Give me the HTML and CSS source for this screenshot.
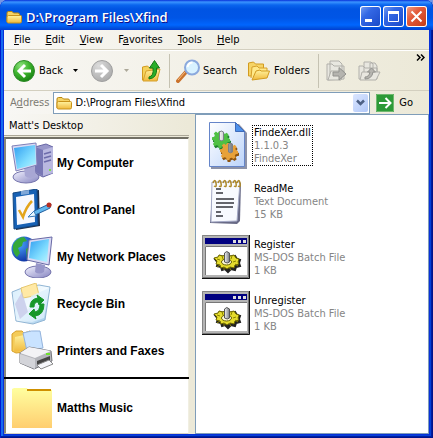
FILE: index.html
```html
<!DOCTYPE html>
<html lang="en">
<head>
<meta charset="utf-8">
<meta name="viewport" content="width=device-width, initial-scale=1">
<title>D:\Program Files\Xfind</title>
<link rel="stylesheet" href="styles.css">
</head>
<body>
<svg class="defs" width="0" height="0" aria-hidden="true">
  <defs>
    <linearGradient id="fold" x2="0" y2="1"><stop stop-color="#fff3a0"/><stop offset="1" stop-color="#f0b93c"/></linearGradient>
    <linearGradient id="music" x2="0" y2="1"><stop stop-color="#ffffa0"/><stop offset="1" stop-color="#ffce70"/></linearGradient>
    <radialGradient id="green" cx=".35" cy=".25" r=".8"><stop stop-color="#8be07c"/><stop offset=".5" stop-color="#3fb52f"/><stop offset="1" stop-color="#158010"/></radialGradient>
    <radialGradient id="gray" cx=".35" cy=".25" r=".8"><stop stop-color="#dcdcdc"/><stop offset="1" stop-color="#a9a9a9"/></radialGradient>
    <linearGradient id="screen" x2="1" y2="1"><stop stop-color="#2f9df0"/><stop offset=".6" stop-color="#7fdcff"/><stop offset="1" stop-color="#b8f4ff"/></linearGradient>
    <linearGradient id="lilac" x2="1" y2="1"><stop stop-color="#f2f2ff"/><stop offset="1" stop-color="#8584c0"/></linearGradient>
    <linearGradient id="bin" x2="1" y2="1"><stop stop-color="#d5ecfb"/><stop offset=".5" stop-color="#f4fbff"/><stop offset="1" stop-color="#8bbfe6"/></linearGradient>
    <linearGradient id="page" x2="1" y2="1"><stop stop-color="#ffffff"/><stop offset="1" stop-color="#bcd4fa"/></linearGradient>
    <linearGradient id="shaft"><stop stop-color="#f4f4f4"/><stop offset="1" stop-color="#777b82"/></linearGradient>
    <radialGradient id="earth" cx=".3" cy=".3" r=".8"><stop stop-color="#4ba6ff"/><stop offset="1" stop-color="#0a2b9c"/></radialGradient>
    <symbol id="folder" viewBox="0 0 16 16">
      <path d="M1 13V4q0-1.500 1.500-1.500h3.500L7.500 4H12q1.500 0 1.500 1.500V7" fill="#f6d466" stroke="#b8860e"/>
      <path d="M2.500 6.500h12q1 0 1 1v5q0 1.500-1.500 1.500H2.500Q1 14 1 12.500V8q0-1.500 1.500-1.500z" fill="url(#fold)" stroke="#c8921a"/>
    </symbol>
    <symbol id="gear" viewBox="-10 -10 20 20">
      <path d="M-2-9h4l.5 2.500 2 .8L6.500-7l2 2.500-1.500 2 .6 1.500L10 0v3l-2.600.5-1 1.600L7.500 7 5 9 3 7.400 1 8l-.6 2h-3L-3.200 7.600-5 7-7.200 8-9 5.500-7.400 3.500-8 1.700-10 1v-3l2.400-.5.8-1.600L-8-6l2.400-2.300 2 1.500z"/>
    </symbol>
    <symbol id="batch" viewBox="0 0 48 44">
      <path fill="#b4b4b4" d="M0 0h48v44H0z"/><path d="M.5 43V.5H47" fill="none" stroke="#858585"/>
      <path d="M47.500 0v43.500H0" fill="none" stroke="#111"/><path d="M46.500 1v41.500H1" fill="none" stroke="#777"/>
      <path d="M3 3h42v6H3z" fill="#000080"/><path d="M31 5h3v3h-3zm5 0h3v3h-3zm5 0h3v3h-3z" fill="#ddd"/>
      <path d="M3 11h42v29H3z" fill="#fff"/><path d="M3.500 40V11.500H45" fill="none" stroke="#777"/>
      <path d="M13 24l4-1 1-2 4 1 3-2 4 2 4-1 2 3 3 1-1 3 1 3-4 1-1 3-4-1-3 3-3-3-3 1-1-3-4-1 1-3z" fill="#222" stroke="#222" stroke-width="2"/>
      <path d="M12 23l4-1 1-2 4 1 3-2 4 2 4-1 2 3 3 1-1 3 1 2-4 1-1 3-4-1-3 2-3-2-3 1-1-3-4-1 1-3z" fill="#e5dc2e" stroke="#6d6700"/>
      <path d="M15 24l3 1m2-4l1 3m9-3l-1 3m5 2l-3 1m-13 3l-3 2m7 0v3m5-3l2 3m4-6l3 2" stroke="#8a8300"/>
      <ellipse cx="24.500" cy="27" rx="5" ry="3" fill="#fffbd8" stroke="#655f00"/>
      <path d="M22.500 18q2-3 5 0v9q-2 2-5 0z" fill="url(#shaft)" stroke="#555"/>
    </symbol>
  </defs>
</svg>
<div class="window">
  <header class="titlebar">
    <svg class="i16" aria-hidden="true"><use href="#folder"/></svg>
    <h1>D:\Program Files\Xfind</h1>
    <button class="caption" aria-label="Minimize"><svg width="21" height="21"><path d="M5 13h7v3H5z" fill="#fff"/></svg></button>
    <button class="caption" aria-label="Maximize"><svg width="21" height="21"><path d="M5.500 6v9.500h10V6" fill="none" stroke="#fff"/><path d="M5 5h11v3H5z" fill="#fff"/></svg></button>
    <button class="caption close" aria-label="Close"><svg width="21" height="21"><path d="M5.500 5.500l10 10m0-10l-10 10" stroke="#fff" stroke-width="2"/></svg></button>
  </header>
  <div class="client">
    <nav class="menu">
      <button><u>F</u>ile</button><button><u>E</u>dit</button><button><u>V</u>iew</button><button>F<u>a</u>vorites</button><button><u>T</u>ools</button><button><u>H</u>elp</button>
    </nav>
    <div class="toolbar">
      <button class="tool back"><svg width="24" height="24"><circle cx="12" cy="12" r="10.500" fill="url(#green)" stroke="#2e8b28"/><path d="M13 6l-6 6 6 6M7.500 12H19" fill="none" stroke="#fff" stroke-width="3"/></svg>Back</button>
      <button class="drop" aria-label="Back history"><svg width="5" height="3"><path d="M0 0h5L2.500 3z"/></svg></button>
      <button class="tool" aria-label="Forward" disabled><svg width="24" height="24"><circle cx="12" cy="12" r="10.500" fill="url(#gray)" stroke="#a0a0a0"/><path d="M11 6l6 6-6 6M16.500 12H5" fill="none" stroke="#fff" stroke-width="3"/></svg></button>
      <button class="drop" aria-label="Forward history" disabled><svg width="5" height="3"><path d="M0 0h5L2.500 3z" fill="#aca899"/></svg></button>
      <button class="tool up" aria-label="Up"><svg width="20" height="24"><path d="M1.500 21V8l5-1 2 2h8v12z" fill="#f5d25b" stroke="#d29b20"/><path d="M2 22l3-10 14-2-3 12z" fill="url(#fold)" stroke="#d6a02d"/><path d="M8 18q5-1 4-9H8.500l5-7.500 5 7.500h-3q1 10-7.500 11z" fill="#29ae28" stroke="#147815"/></svg></button>
      <span class="rule"></span>
      <button class="tool search"><svg width="24" height="24"><path d="M2 22l8-9" stroke="#ca722c" stroke-width="4" stroke-linecap="round"/><path d="M2 21l7-8" stroke="#f6bd82" stroke-width="1"/><circle cx="16" cy="8.500" r="7" fill="#d8f2ff" stroke="#8ba9dd" stroke-width="2"/><path d="M11.500 8q1-4.500 5-4.500" fill="none" stroke="#fff" stroke-width="2"/></svg>Search</button>
      <button class="tool"><svg width="24" height="24"><path d="M1.500 17V4l5-1 2 2h8v12z" fill="#f6d466" stroke="#d29b20"/><path d="M4 19l1-11 5-1 2 2h8v3" fill="#ffe98a" stroke="#d6a02d"/><path d="M5 21l4-9 4-1 1 1h8.500L20 19z" fill="url(#fold)" stroke="#d29b20"/></svg>Folders</button>
      <span class="rule"></span>
      <button class="tool" aria-label="Move To" disabled><svg width="24" height="24" fill="#e8e7e0" stroke="#b1b0aa"><path d="M2 21V5h5l2 2h10v13zM5 20V2h9l3 3v12"/><path d="M3 21l3-9h13l-3 9z"/><path d="M8 13h6V8.500l7 6.500-7 6v-4H8z" fill="#b5b4af" stroke="#92928e"/></svg></button>
      <button class="tool copy" aria-label="Copy To" disabled><svg width="24" height="24" fill="#e8e7e0" stroke="#b1b0aa"><path d="M2 20V7h4l2 2h12v11zM7 17V3h7l2 2v12M13 14V4h5l2 3v10"/><path d="M3 21l2-8h18l-4 8z"/><path d="M8 18q4 0 5-5h-2.500l4-4 4 4H16q-1 7-8 7z" fill="#b5b4af" stroke="#92928e"/></svg></button>
      <button class="more" aria-label="More buttons"><svg width="9" height="7"><path d="M1 .5l3 3-3 3M5 .5l3 3-3 3" fill="none" stroke="#000" stroke-width="1.500"/></svg></button>
    </div>
    <div class="address">
      <label for="addr">A<u>d</u>dress</label>
      <div class="combo">
        <svg class="i16" aria-hidden="true"><use href="#folder"/></svg>
        <input id="addr" type="text" value="D:\Program Files\Xfind">
        <button aria-label="Show addresses"><svg width="15" height="18"><path d="M4 6.500l3.500 3.500L11 6.500" fill="none" stroke="#4d6185" stroke-width="2.500"/></svg></button>
      </div>
      <button class="go"><svg width="18" height="18"><path d="M0 0h18v18H0z" fill="#2d9a38"/><path d="M.5.500h17v17H.5z" fill="none" stroke="#6fb86e"/><path d="M3 9h11M9.500 4l5 5-5 5" fill="none" stroke="#fff" stroke-width="2"/></svg>Go</button>
    </div>
    <div class="panes">
      <aside class="side">
        <h2>Matt's Desktop</h2>
        <ul class="places">
          <li><a href="#"><svg viewBox="0 0 42 42"><path d="M24 5l11-3 7 3v26l-10 4-8-4z" fill="#9897ca" stroke="#6766a5"/><path d="M24 5l8 3v26l-8-4z" fill="#7877b5"/><path d="M32 8l10-3v26l-10 3z" fill="#b9b8e0"/><path d="M33 12l7-2m-7 6l7-2m-7 6l7-2" stroke="#6c6baa" stroke-width="1.500"/><path d="M38 27h2v2h-2z" fill="#7be04b"/><ellipse cx="15" cy="35" rx="13" ry="6" fill="url(#lilac)" stroke="#7675ad"/><path d="M13 25l10-2 2 11q-6 4-11 0z" fill="#a8a7d4"/><path d="M1 4l24-3 1 22-21 6z" fill="#d9d9f4" stroke="#7f80b8"/><path d="M3 6l21-3 1 19-19 5z" fill="url(#screen)"/></svg>My Computer</a></li>
          <li><a href="#"><svg viewBox="0 0 42 42"><path d="M4 4l24-3 1 36-24 4z" fill="#222f48"/><path d="M2 4l24-4 1 36-24 4z" fill="#1761b5" stroke="#114784"/><path d="M5 8l18-3 1 28-18 3z" fill="#f6f8ff"/><path d="M10 2l8-1v4l-8 1z" fill="#7ea6d8"/><path d="M8 21l4 7q3-10 9-16" fill="none" stroke="#e3a51c" stroke-width="2.500"/><path d="M19 27l4-5 13-6 4-1-1 4-4 2-13 6z" fill="#62b8ee" stroke="#245f9f"/><path d="M17 28l6-6 2 5z" fill="#e9f7ff" stroke="#3c7dba"/><circle cx="38" cy="16" r="2.500" fill="#b62d20"/></svg>Control Panel</a></li>
          <li><a href="#"><svg viewBox="0 0 42 42"><circle cx="13" cy="13" r="12.500" fill="url(#earth)"/><path d="M2 9q4-8 11-8l3 4-4 1-1 4-4 2 2 5-3 4q-5-4-4-12zM15 13l5-3 5 4-3 8-6 2z" fill="#35a83a"/><ellipse cx="27" cy="36" rx="13" ry="6" fill="url(#lilac)" stroke="#7675ad"/><path d="M25 27l9 2-1 7q-5 3-9 0z" fill="#9796c9"/><path d="M18 4l23-3-3 28-22-5z" fill="#d9d9f4" stroke="#6869a5"/><path d="M20 6l18-3-2 23-18-4z" fill="url(#screen)"/></svg>My Network Places</a></li>
          <li><a href="#"><svg viewBox="0 0 42 42"><path d="M1 9l10-4 17-3 11 2-5 33-12 4-17-3z" fill="url(#bin)" stroke="#91b5d4"/><path d="M10 5l15-5 3 12-16 3z" fill="#ffe9a5" stroke="#e7c86f"/><path d="M2 11l11 4 4 14 3-16 18-8-5 30-12 4-16-3z" fill="#dff0fc" opacity=".8"/><path d="M11 9l6 20-8 7-5-15z" fill="#c4c4e6" opacity=".7"/><path d="M19 24q0-8 8-9l-1-3 7 5-5 5-1-3q-4 0-4 5zM33 21q0 11-9 12l1 3-7-5 5-5 1 3q5-1 5-8z" fill="#17972a" stroke="#17972a"/></svg>Recycle Bin</a></li>
          <li><a href="#"><svg viewBox="0 0 42 42"><path d="M1 4l4-3h6l2 2 6-2 3 3v17L5 23l-4-2z" fill="#f4cb58" stroke="#d8a029"/><path d="M4 7l14-3v16L3 22z" fill="url(#fold)"/><path d="M12 3q8-3 17-2l3 17-16 3z" fill="#c9e3ff" stroke="#93b3dc"/><path d="M9 23l9-6 22 4 1 10-18 8-14-6z" fill="#b4b5bb" stroke="#74757b"/><path d="M9 23l9-6 22 4-16 7z" fill="#f3f3f6"/><path d="M9 24l15 5v10L9 33z" fill="#d3d4d9"/><path d="M26 31l13-5v5l-13 5z" fill="#444"/><path d="M26 35l12-5 4 4-12 5z" fill="#f5f6fa" stroke="#888"/><path d="M35 23h4v2h-4z" fill="#6ee12c"/></svg>Printers and Faxes</a></li>
        </ul>
        <hr>
        <ul class="places extra">
          <li><a href="#"><svg viewBox="0 0 42 42"><path d="M1 3V2l2-1h13l1 2h24v38H1z" fill="url(#music)"/><path d="M16 2h24v2H16z" fill="#cf9000"/></svg>Matths Music</a></li>
        </ul>
      </aside>
      <main class="files">
        <a class="file focus" href="#"><svg viewBox="0 0 48 48"><path d="M8 3h29l8 9v36H9z" fill="#8d93a8"/><path d="M7.500 1.500h26l9 9v35h-35z" fill="url(#page)" stroke="#6585c9"/><path d="M33.500 1.500l9 9h-9z" fill="#4c90ea" stroke="#3e6ab9"/><use href="#gear" x="10" y="11" width="20" height="18" fill="#1f8030"/><use href="#gear" x="9" y="9" width="20" height="18" fill="#4fc044"/><use href="#gear" x="18" y="23" width="20" height="18" fill="#8f5510"/><use href="#gear" x="17" y="21" width="20" height="18" fill="#e7a13a"/><path d="M17.500 11q1.500-2 4 0v8q-2 1.500-4 0zM26.500 23q1.500-2 4 0v8q-2 1.500-4 0z" fill="url(#shaft)" stroke="#7b8089"/></svg><span class="info"><b>FindeXer.dll</b><i>1.1.0.3</i><i>FindeXer</i></span></a>
        <a class="file" href="#"><svg viewBox="0 0 48 48"><path d="M11 6h28l-1 38-3 3-27-1z" fill="#686a86"/><path d="M10 5h28l-3 39-26 1z" fill="#f8faff" stroke="#a4a9c6"/><g fill="none" stroke="#33343d" stroke-width="1.500"><path d="M14 12h5m-5 4h7m-7 6h18m-18 4h18m-18 4h17m-17 5h5m-5 4h7"/></g><path d="M11 6q2-5 3 0t-2 3M16 6q2-5 3 0t-2 3M21 6q2-5 3 0t-2 3M26 6q2-5 3 0t-2 3M31 6q2-5 3 0t-2 3M35 6q2-5 3 0t-2 3" fill="none" stroke="#ae8929" stroke-width="1.500"/></svg><span class="info"><b>ReadMe</b><i>Text Document</i><i>15 KB</i></span></a>
        <a class="file" href="#"><svg><use href="#batch"/></svg><span class="info"><b>Register</b><i>MS-DOS Batch File</i><i>1 KB</i></span></a>
        <a class="file" href="#"><svg><use href="#batch"/></svg><span class="info"><b>Unregister</b><i>MS-DOS Batch File</i><i>1 KB</i></span></a>
      </main>
    </div>
  </div>
</div>
</body>
</html>
```
FILE: styles.css
```css
* { box-sizing: border-box; }
body {
  margin: 0;
  background: #7696e4;
  font: 11px/13px "DejaVu Sans Condensed", "DejaVu Sans", sans-serif;
  color: #000;
}
.defs { position: absolute; }
button { border: 0; padding: 0; background: none; font: inherit; color: inherit; }
button svg { display: block; flex: none; }
h1, h2, ul { margin: 0; padding: 0; font: inherit; list-style: none; }
a { color: inherit; text-decoration: none; }
.i16 { width: 16px; height: 16px; flex: none; }

.window {
  display: flex;
  flex-direction: column;
  min-height: 100vh;
  padding: 0 4px 4px;
  border-radius: 8px 8px 0 0;
  background: #0831d9;
  box-shadow: inset 1px 0 #0019cf, inset -1px -1px #00138c, inset -2px -2px #001ea0, inset 3px 0 #166aee, inset -3px -3px #0441d8;
}
.titlebar {
  display: flex;
  align-items: center;
  gap: 2px;
  height: 30px;
  margin: 0 -4px;
  padding: 3px 6px 0;
  border-radius: 8px 8px 0 0;
  background: linear-gradient(#0831d9, #3a93ff 2px, #0a65ee 5px, #0054e3 9px, #0055e6 18px, #0066fe 25px, #0050dc 28px, #003dd7);
}
.titlebar h1 {
  flex: 1;
  padding-left: 2px;
  font: 600 13px/20px "Open Sans", sans-serif;
  color: #fff;
  text-shadow: 1px 1px #0f1089;
}
.caption {
  width: 21px;
  height: 21px;
  border-radius: 3px;
  background: linear-gradient(135deg, #7ba2f2, #3468e5 35%, #2354d3 75%, #154ac2);
  box-shadow: inset 0 0 0 1px #fff;
}
.close { background: linear-gradient(135deg, #f0a48c, #e35b3c 40%, #d04520 80%, #b33810); }

.client { flex: 1; display: flex; flex-direction: column; background: #ece9d8; }
.menu, .toolbar, .address {
  display: flex;
  align-items: center;
  background: linear-gradient(90deg, #f8f7f4, #ece9d8);
  border-bottom: 1px solid #d3cfbf;
}
.menu { height: 20px; padding-left: 2px; }
.menu button { padding: 0 8px 0 7px; }
.menu button:first-child { padding-left: 8px; }
.toolbar { position: relative; height: 41px; padding: 0 8px; border-top: 1px solid #fff; }
.tool { display: flex; align-items: center; gap: 3px; }
.drop { padding: 0 12px 0 10px; }
.search { margin-right: 10px; }
.copy { margin-left: 8px; }
.rule { width: 1px; height: 34px; margin: 0 6px 0 8px; background: #c5c2b2; }
.more { position: absolute; top: 3px; right: 4px; }

.address { height: 23px; gap: 4px; padding-left: 6px; border: 0; }
.address label { color: #7d7b73; }
.combo {
  flex: 1;
  display: flex;
  align-items: center;
  gap: 3px;
  height: 22px;
  min-width: 0;
  padding: 0 1px 0 2px;
  border: 1px solid #7f9db9;
  background: #fff;
}
.combo input { flex: 1; min-width: 0; border: 0; padding: 0; outline: 0; font: inherit; background: none; }
.combo button { border-radius: 2px; background: linear-gradient(135deg, #dbe6ff, #b1c8f8); }
.go { display: flex; align-items: center; gap: 5px; padding: 0 16px 0 2px; }

.panes { flex: 1; display: grid; grid-template-columns: 191px 1fr; }
.side { display: flex; flex-direction: column; padding-right: 6px; background: #ece9d8; }
.side h2 {
  height: 22px;
  padding: 5px 5px 0;
  background: linear-gradient(90deg, #f8f7f4, #ece9d8);
  border-bottom: 1px solid #aca899;
}
.places {
  padding: 0 5px;
  background: #fff;
  border-left: 2px solid #8a8779;
  border-right: 1px solid #f1efe2;
}
.side h2 + .places { margin-top: 1px; padding-bottom: 3px; border-top: 2px solid #716f64; }
.places a { display: flex; align-items: center; gap: 4px; height: 47px; font: bold 12px/16px "Liberation Sans", sans-serif; }
.places svg { width: 42px; height: 42px; flex: none; }
.side hr { width: 100%; height: 2px; margin: 0; border: 0; background: #000; flex: none; }
.extra { flex: 1; padding-top: 5px; border-bottom: 1px solid #d8d4c4; }

.files {
  display: flex;
  flex-direction: column;
  gap: 8px;
  padding: 6px;
  background: #fff;
  border: 1px solid #7f9db9;
}
.file { display: flex; align-items: center; gap: 3px; height: 48px; }
.file svg { width: 48px; height: 48px; flex: none; }
.info { padding: 0 1px; }
.info b, .info i { display: block; font-weight: normal; font-style: normal; white-space: nowrap; }
.info i { color: #858585; }
.focus .info { outline: 1px dotted #000; }
```
